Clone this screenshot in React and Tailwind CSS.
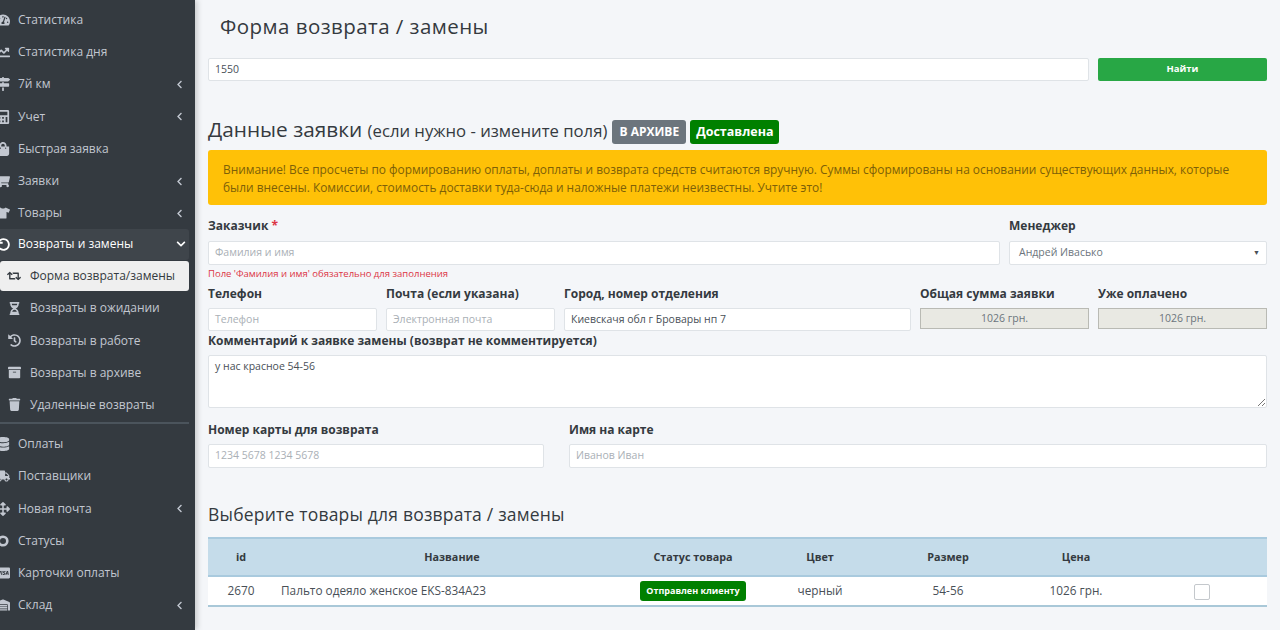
import React from "react";
import {
  FaTachometerAlt, FaChartLine, FaMapSigns, FaCalculator, FaShoppingBag, FaShoppingCart, FaTshirt,
  FaUndo, FaRetweet, FaHourglassHalf, FaHistory, FaArchive, FaTrash, FaDatabase, FaTruck,
  FaArrowsAlt, FaCcVisa, FaWarehouse, FaChevronLeft, FaChevronDown,
} from "react-icons/fa";

const RingIcon = () => (
  <svg className="h-[12px] w-[12px]" viewBox="0 0 12 12">
    <circle cx="6" cy="6" r="4.3" fill="none" stroke="currentColor" strokeWidth="2.6" />
  </svg>
);

const topItems = [
  { label: "Статистика", icon: FaTachometerAlt },
  { label: "Статистика дня", icon: FaChartLine },
  { label: "7й км", icon: FaMapSigns, arrow: true },
  { label: "Учет", icon: FaCalculator, arrow: true },
  { label: "Быстрая заявка", icon: FaShoppingBag },
  { label: "Заявки", icon: FaShoppingCart, arrow: true },
  { label: "Товары", icon: FaTshirt, arrow: true },
];

const subItems = [
  { label: "Возвраты в ожидании", icon: FaHourglassHalf },
  { label: "Возвраты в работе", icon: FaHistory },
  { label: "Возвраты в архиве", icon: FaArchive },
  { label: "Удаленные возвраты", icon: FaTrash },
];

const bottomItems = [
  { label: "Оплаты", icon: FaDatabase },
  { label: "Поставщики", icon: FaTruck },
  { label: "Новая почта", icon: FaArrowsAlt, arrow: true },
  { label: "Статусы", icon: RingIcon },
  { label: "Карточки оплаты", icon: FaCcVisa },
  { label: "Склад", icon: FaWarehouse, arrow: true },
];

const MenuItem = ({ item }) => {
  const Icon = item.icon;
  return (
    <div className="flex h-[32.2px] items-center text-[12px] text-[#c2c7d0]">
      <span className="-ml-[5px] mr-[7px] flex w-[16px] justify-center text-[14px]">
        <Icon />
      </span>
      <span>{item.label}</span>
      {item.arrow && <FaChevronLeft className="ml-auto mr-[11px] text-[9px]" />}
    </div>
  );
};

const Sidebar = () => (
  <aside className="h-[630px] w-[195px] shrink-0 overflow-hidden bg-[#343a40] pt-[4px] shadow-[2px_0_6px_rgba(0,0,0,0.2)]">
    {topItems.map((item) => (
      <MenuItem key={item.label} item={item} />
    ))}
    <div className="w-[189px]">
      <div className="flex h-[31px] items-center rounded-r-[3px] bg-[#3f454b] pb-[1px] text-[12px] text-white">
        <span className="-ml-[5px] mr-[7px] flex w-[16px] justify-center text-[13px]">
          <FaUndo />
        </span>
        <span>Возвраты и замены</span>
        <FaChevronDown className="ml-auto mr-[3px] text-[10px]" />
      </div>
      <div className="mt-[1px] flex h-[30px] items-center rounded-[3px] bg-[#efefef] text-[12px] text-[#343a40]">
        <span className="ml-[6px] mr-[8px] flex w-[16px] justify-center text-[14px]">
          <FaRetweet />
        </span>
        <span>Форма возврата/замены</span>
      </div>
      <div className="mt-[1px] border-b-2 border-[#4b545c] pb-[1px]">
        {subItems.map((item) => {
          const Icon = item.icon;
          return (
            <div key={item.label} className="flex h-[32.2px] items-center text-[12px] text-[#c2c7d0]">
              <span className="ml-[6px] mr-[8px] flex w-[16px] justify-center text-[13px]">
                <Icon />
              </span>
              <span>{item.label}</span>
            </div>
          );
        })}
      </div>
    </div>
    <div className="mt-[4px]">
      {bottomItems.map((item) => (
        <MenuItem key={item.label} item={item} />
      ))}
    </div>
  </aside>
);

const Label = ({ children, className = "" }) => (
  <div className={`text-[12px] font-bold leading-[17px] text-[#343a40] ${className}`}>{children}</div>
);

const TextInput = ({ placeholder, value, className = "" }) => (
  <div
    className={`flex h-[23px] items-center rounded-[2px] border border-[#dfe3e7] bg-white px-[6px] text-[10.5px] ${
      value ? "text-[#495057]" : "text-[#aab0b6]"
    } ${className}`}
  >
    {value || placeholder}
  </div>
);

const ReadOnly = ({ value }) => (
  <div className="flex h-[21px] items-center justify-center border border-[#b9bab4] bg-[#e9e9e3] text-[10.5px] text-[#6c757d]">
    {value}
  </div>
);

const App = () => {
  return (
    <div className="flex h-[630px] w-[1280px] overflow-hidden bg-[#f4f6f9] font-['Open_Sans',sans-serif]">
      <Sidebar />
      <main className="w-[1085px] pl-[13px] pr-[13px]">
        <h1 className="h-[58px] pl-[12px] pt-[11px] text-[20.5px] leading-[30px] tracking-[0.45px] text-[#343a40]">
          Форма возврата / замены
        </h1>

        <div className="flex gap-[9px]">
          <TextInput value="1550" className="flex-1" />
          <div className="flex h-[23px] w-[169px] items-center justify-center rounded-[2px] bg-[#28a745] text-[9.5px] font-bold text-white">
            Найти
          </div>
        </div>

        <div className="mt-[33px] flex h-[32px] items-center">
          <h2 className="text-[20.8px] leading-[32px] text-[#343a40]">
            Данные заявки <span className="text-[16.7px]">(если нужно - измените поля)</span>
          </h2>
          <span className="ml-[5px] mt-[4px] flex h-[24px] w-[74px] items-center justify-center rounded-[3px] bg-[#6c757d] text-[12px] font-bold text-white">
            В АРХИВЕ
          </span>
          <span className="ml-[4px] mt-[4px] flex h-[24px] w-[89px] items-center justify-center rounded-[3px] bg-[#008000] text-[12.5px] font-bold text-white">
            Доставлена
          </span>
        </div>

        <div className="mt-[4px] h-[55px] rounded-[3px] bg-[#ffc107] pl-[15px] pr-[20px] pt-[10px] text-[11.9px] leading-[18px] text-[#7d6008]">
          Внимание! Все просчеты по формированию оплаты, доплаты и возврата средств считаются вручную. Суммы сформированы на основании существующих данных, которые были внесены. Комиссии, стоимость доставки туда-сюда и наложные платежи неизвестны. Учтите это!
        </div>

        <div className="mt-[12px] grid grid-cols-[792px_258px] gap-x-[9px]">
          <div>
            <Label>
              Заказчик <span className="text-[#dc3545]">*</span>
            </Label>
            <TextInput placeholder="Фамилия и имя" className="mt-[7px] h-[24px]" />
            <div className="mt-[2px] text-[9.5px] leading-[14px] text-[#dc3545]">
              Поле 'Фамилия и имя' обязательно для заполнения
            </div>
          </div>
          <div>
            <Label>Менеджер</Label>
            <div className="mt-[7px] flex h-[24px] items-center justify-between rounded-[2px] border border-[#dfe3e7] bg-white pl-[9px] pr-[6px] text-[10.5px] text-[#6c757d]">
              Андрей Ивасько
              <span className="text-[7px] text-[#495057]">▼</span>
            </div>
          </div>
        </div>

        <div className="mt-[4px] grid grid-cols-[169px_169px_347px_169px_169px] gap-x-[9px]">
          <div>
            <Label>Телефон</Label>
            <TextInput placeholder="Телефон" className="mt-[6px]" />
          </div>
          <div>
            <Label>Почта (если указана)</Label>
            <TextInput placeholder="Электронная почта" className="mt-[6px]" />
          </div>
          <div>
            <Label>Город, номер отделения</Label>
            <TextInput value="Киевскачя обл г Бровары нп 7" className="mt-[6px]" />
          </div>
          <div>
            <Label>Общая сумма заявки</Label>
            <div className="mt-[6px]">
              <ReadOnly value="1026 грн." />
            </div>
          </div>
          <div>
            <Label>Уже оплачено</Label>
            <div className="mt-[6px]">
              <ReadOnly value="1026 грн." />
            </div>
          </div>
        </div>

        <Label className="mt-[1px]">Комментарий к заявке замены (возврат не комментируется)</Label>
        <div className="relative mt-[6px] h-[53px] rounded-[2px] border border-[#dfe3e7] bg-white px-[6px] pt-[3px] text-[10.5px] text-[#495057]">
          у нас красное 54-56
          <svg className="absolute bottom-[1px] right-[1px] h-[8px] w-[8px]" viewBox="0 0 8 8">
            <path d="M8 1 1 8M8 5 5 8" stroke="#777" strokeWidth="1" />
          </svg>
        </div>

        <div className="mt-[13px] grid grid-cols-[336px_698px] gap-x-[25px]">
          <div>
            <Label>Номер карты для возврата</Label>
            <TextInput placeholder="1234 5678 1234 5678" className="mt-[6px] h-[24px]" />
          </div>
          <div>
            <Label>Имя на карте</Label>
            <TextInput placeholder="Иванов Иван" className="mt-[6px] h-[24px]" />
          </div>
        </div>

        <h3 className="mt-[32px] text-[17.5px] leading-[28px] tracking-[0.2px] text-[#343a40]">
          Выберите товары для возврата / замены
        </h3>

        <table className="mt-[9px] w-[1059px] table-fixed border-b-2 border-[#a9c8d8] text-[11.8px]">
          <colgroup>
            <col className="w-[66px]" />
            <col className="w-[356px]" />
            <col className="w-[126px]" />
            <col className="w-[128px]" />
            <col className="w-[128px]" />
            <col className="w-[128px]" />
            <col className="w-[127px]" />
          </colgroup>
          <thead>
            <tr className="h-[38px] border-y-2 border-[#a9cade] bg-[#c5dcea] text-[10.8px] font-bold text-[#343a40]">
              <th>id</th>
              <th>Название</th>
              <th>Статус товара</th>
              <th>Цвет</th>
              <th>Размер</th>
              <th>Цена</th>
              <th></th>
            </tr>
          </thead>
          <tbody>
            <tr className="h-[30px] bg-white text-center text-[#495057]">
              <td>2670</td>
              <td className="pl-[7px] text-left">Пальто одеяло женское EKS-834A23</td>
              <td>
                <span className="inline-flex h-[20px] w-[106px] items-center justify-center rounded-[3px] bg-[#008000] text-[9px] font-bold text-white">
                  Отправлен клиенту
                </span>
              </td>
              <td>черный</td>
              <td>54-56</td>
              <td>1026 грн.</td>
              <td>
                <span className="ml-[-4px] inline-block h-[16px] w-[16px] rounded-[2px] border border-[#c4c8cc] bg-white align-middle" />
              </td>
            </tr>
          </tbody>
        </table>
      </main>
    </div>
  );
};

export default App;
